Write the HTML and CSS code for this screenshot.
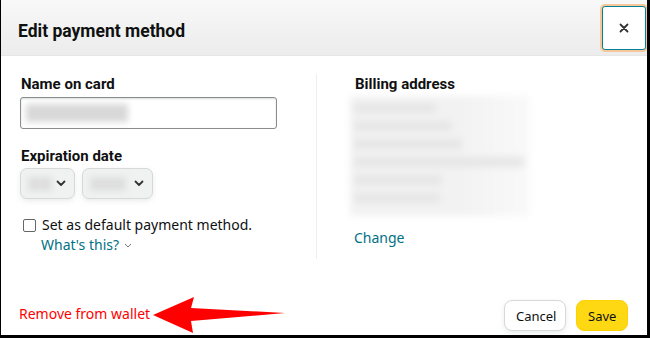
FILE: index.html
```html
<!DOCTYPE html>
<html>
<head>
<meta charset="utf-8">
<link rel="stylesheet" href="styles.css">
</head>
<body>
<div class="frame">
  <header class="head">
    <h1 class="title">Edit payment method</h1>
    <button class="close" aria-label="Close">
      <svg width="10" height="10" viewBox="0 0 10 10"><path d="M1.5 1.5 L8.5 8.5 M8.5 1.5 L1.5 8.5" stroke="#333" stroke-width="1.8" stroke-linecap="round"/></svg>
    </button>
  </header>
  <main class="content">
    <section class="left">
      <div class="label">Name on card</div>
      <div class="input"><span class="blur name-blur"></span></div>
      <div class="label exp">Expiration date</div>
      <div class="selects">
        <div class="select s1"><span class="blur sb1"></span><svg class="chev" width="10" height="7" viewBox="0 0 10 7"><path d="M1.5 1.5 L5 5 L8.5 1.5" fill="none" stroke="#333" stroke-width="1.8" stroke-linecap="round" stroke-linejoin="round"/></svg></div>
        <div class="select s2"><span class="blur sb2"></span><svg class="chev" width="10" height="7" viewBox="0 0 10 7"><path d="M1.5 1.5 L5 5 L8.5 1.5" fill="none" stroke="#333" stroke-width="1.8" stroke-linecap="round" stroke-linejoin="round"/></svg></div>
      </div>
      <label class="check">
        <span class="box"></span>
        <span>Set as default payment method.</span>
      </label>
      <div class="whats">What's this? <svg width="8" height="5" viewBox="0 0 8 5"><path d="M1 1 L4 4 L7 1" fill="none" stroke="#777" stroke-width="1"/></svg></div>
    </section>
    <div class="divider"></div>
    <section class="right">
      <div class="label">Billing address</div>
      <div class="addr">
        <span class="line" style="width:82px"></span>
        <span class="line" style="width:98px"></span>
        <span class="line" style="width:108px"></span>
        <span class="line" style="width:170px"></span>
        <span class="line" style="width:88px"></span>
        <span class="line" style="width:86px"></span>
      </div>
      <a class="link change">Change</a>
    </section>
  </main>
  <footer class="foot">
    <a class="remove">Remove from wallet</a>
    <div class="buttons">
      <button class="btn cancel">Cancel</button>
      <button class="btn save">Save</button>
    </div>
  </footer>
  <svg class="arrow" width="140" height="40" viewBox="150 295 140 40"><path d="M152 315 L193 297 L190 308 L284 313 L190 321 L192 333 Z" fill="#ff0000"/></svg>
</div>
</body>
</html>
```
FILE: styles.css
```css
* { box-sizing: border-box; }
html, body { margin: 0; padding: 0; background: #fff; }
body { font-family: "Noto Sans", Roboto, Arial, sans-serif; color: #0f1111; }
.frame {
  position: relative;
  width: 650px;
  height: 338px;
  border-left: 1px solid #000;
  border-right: 3px solid #000;
  border-bottom: 3px solid #000;
  display: flex;
  flex-direction: column;
  overflow: hidden;
}
.head {
  height: 56px;
  background: linear-gradient(#f8f8f8, #ececec);
  display: flex;
  align-items: center;
  justify-content: space-between;
  padding: 0 1px 0 17px;
  border-bottom: 1px solid #e6e6e6;
}
.title { margin: 6px 0 0; font-family: Roboto, "Noto Sans", sans-serif; font-size: 17.5px; font-weight: 700; letter-spacing: 0; }
.close {
  width: 44px; height: 44px;
  background: #fff;
  border: 1px solid #008296;
  border-radius: 3px;
  box-shadow: 0 0 0 2px #f7c79b;
  display: flex; align-items: center; justify-content: center;
  padding: 0;
}
.content {
  display: flex;
  padding: 18px 0 0 19px;
  height: 203px;
}
.left { width: 278px; }
.divider { width: 1px; background: #eee; margin: 0 0 0 18px; }
.right { padding-left: 37px; }
.label { font-family: Roboto, "Noto Sans", sans-serif; font-size: 15px; font-weight: 700; line-height: 20px; padding-left: 1px; }
.input {
  margin-top: 3px;
  width: 257px; height: 32px;
  border: 1px solid #888c8c;
  border-radius: 3px;
  padding: 6px 5px;
  box-shadow: 0 1px 2px rgba(15,17,17,.15) inset;
}
.blur { display: block; background: #d8d8d8; filter: blur(3px); }
.name-blur { width: 102px; height: 18px; }
.exp { margin-top: 17px; }
.selects { display: flex; gap: 7px; margin-top: 2px; }
.select {
  height: 31px;
  border: 1px solid #d5d9d9;
  border-radius: 7px;
  background: #f0f2f2;
  box-shadow: 0 2px 5px rgba(213,217,217,.5);
  display: flex; align-items: center;
  padding: 0 8px 0 7px;
  justify-content: space-between;
}
.s1 { width: 55px; }
.s2 { width: 71px; }
.sb1 { width: 24px; height: 14px; background: #dedede; }
.sb2 { width: 36px; height: 14px; background: #dedede; }
.check { display: flex; align-items: center; gap: 6px; margin-top: 16px; padding-left: 3px; font-size: 14px; line-height: 20px; }
.box { width: 13px; height: 13px; border: 1px solid #666; border-radius: 2px; background: #fff; }
.whats { color: #007185; font-size: 14px; line-height: 20px; padding-left: 21px; margin-top: 0; display: flex; align-items: center; gap: 5px; }
.addr {
  margin-top: 2px;
  margin-left: -4px;
  width: 180px;
  height: 120px;
  display: flex; flex-direction: column; gap: 8px;
  padding: 7px 4px;
  background: linear-gradient(90deg, #f2f2f2 60%, #f9f9f9);
  filter: blur(3.5px);
}
.line { display: block; height: 10px; background: #e6e6e6; }
.link { color: #007185; font-size: 14px; text-decoration: none; }
.change { display: block; margin-top: 12px; line-height: 20px; }
.foot {
  flex: 1;
  display: flex;
  align-items: flex-end;
  justify-content: space-between;
  padding: 0 19px 4px 18px;
}
.remove { color: #ff0000; font-size: 14px; line-height: 20px; margin-bottom: 7px; }
.buttons { display: flex; gap: 10px; }
.btn {
  font-family: inherit;
  font-size: 13px;
  height: 31px;
  border-radius: 8px;
  padding: 0 11px;
  color: #0f1111;
}
.cancel { background: #fff; border: 1px solid #d5d9d9; box-shadow: 0 2px 5px rgba(213,217,217,.5); width: 62px; }
.save { background: #ffd814; border: 1px solid #fcd200; width: 52px; }
.arrow { position: absolute; left: 150px; top: 295px; }
```
